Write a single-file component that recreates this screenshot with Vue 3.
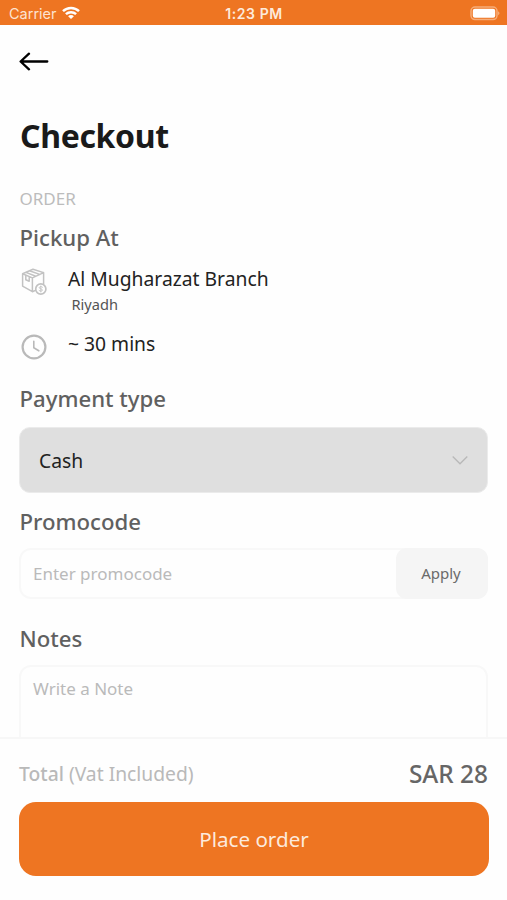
<script setup>
import { ref } from 'vue'

const promo = ref('')
const note = ref('')
</script>

<template>
  <div class="screen">
    <header class="status">
      <div class="carrier">
        <span>Carrier</span>
        <svg width="18" height="14" viewBox="0 0 18 14" fill="none" stroke="#fff" stroke-width="2.5">
          <path d="M1 5.2C5.5.9 12.5.9 17 5.2" />
          <path d="M3.9 8.2c2.9-2.7 7.3-2.7 10.2 0" />
          <path d="M6.1 10.2c1.6-1.5 4.2-1.5 5.8 0L9 13.1z" fill="#fff" stroke="none" />
        </svg>
      </div>
      <span class="time">1:23 PM</span>
      <svg class="battery" width="31" height="15" viewBox="0 0 31 15">
        <rect x="1" y="1" width="26" height="12.6" rx="4" fill="none" stroke="#f6ad79" stroke-width="1.5" />
        <rect x="2.8" y="2.8" width="22.4" height="9" rx="2" fill="#fff" />
        <path d="M28.3 5.3q2.2 2 0 4z" fill="#f9c39b" />
      </svg>
    </header>

    <main class="content">
      <svg class="back" width="30" height="20" viewBox="0 0 30 20" fill="none" stroke="#000" stroke-width="2.3" stroke-linecap="round" stroke-linejoin="round">
        <path d="M28.3 10.5H1.8M10 2.7L1.6 10.5l8.4 7.8" />
      </svg>
      <h1>Checkout</h1>
      <p class="eyebrow">ORDER</p>
      <h2 class="t-pickup">Pickup At</h2>

      <div class="info branch">
        <svg width="28" height="28" viewBox="0 0 28 28" fill="none" stroke="#c2c2c2" stroke-width="1.5" stroke-linejoin="round" stroke-linecap="round">
          <path d="M2.6 5.8L13 1.2l10.6 3.4v11.2M2.6 5.8l9.8 4.1 11.2-5.3M2.6 5.8v12.3l9.8 5.6 3.6-1.6M12.4 9.9v13.8M5.9 4.4l9.9 3.9M9.5 2.8l10.2 3.6M5.8 7.4v4.3l3.4 1.5V8.8" />
          <circle cx="20.8" cy="21" r="5.1" fill="#fff" stroke-width="1.7" />
          <path d="M22.5 19.2c-1-1-3.3-.7-3.3.5 0 1.5 3.3.8 3.3 2.4 0 1.2-2.4 1.4-3.4.4M20.8 18v6" stroke-width=".9" />
        </svg>
        <div class="place">
          <span class="line">Al Mugharazat Branch</span>
          <span class="city">Riyadh</span>
        </div>
      </div>
      <div class="info eta">
        <svg width="28" height="28" viewBox="0 0 28 28" fill="none" stroke="#b9b9b9" stroke-linecap="round" stroke-linejoin="round">
          <circle cx="14" cy="14" r="11.4" stroke-width="2.2" />
          <path d="M13.8 8.2v6.6l5 3" stroke-width="1.6" />
        </svg>
        <span class="line">~ 30 mins</span>
      </div>

      <h2 class="t-payment">Payment type</h2>
      <div class="select">
        <span>Cash</span>
        <svg width="18" height="12" viewBox="0 0 18 12" fill="none" stroke="#b8b8b8" stroke-width="1.3">
          <path d="M1.7 2.5L9 9.8 16.3 2.5" />
        </svg>
      </div>

      <h2 class="t-promo">Promocode</h2>
      <div class="promo">
        <input v-model="promo" placeholder="Enter promocode" />
        <button class="apply">Apply</button>
      </div>

      <h2 class="t-notes">Notes</h2>
      <textarea v-model="note" placeholder="Write a Note"></textarea>
    </main>

    <footer class="summary">
      <div class="total">
        <span class="label"><b>Total</b> (Vat Included)</span>
        <span class="amount">SAR 28</span>
      </div>
      <button class="order">Place order</button>
    </footer>
  </div>
</template>

<style>
body {
  margin: 0;
  background: #fff;
}
</style>

<style scoped>
.screen {
  display: flex;
  flex-direction: column;
  width: 507px;
  height: 900px;
  overflow: hidden;
  background: #fefefe;
  font-family: "Noto Sans", "Open Sans", sans-serif;
  color: #222;
}
.screen * {
  box-sizing: border-box;
}
svg {
  display: block;
  flex: none;
}
.status {
  display: grid;
  grid-template-columns: 1fr auto 1fr;
  align-items: center;
  flex: none;
  height: 25px;
  padding: 2px 6px 0 9px;
  background: #ee7522;
  color: #fff;
  font: 14.5px/20px Inter, sans-serif;
}
.carrier {
  display: flex;
  align-items: center;
  gap: 5px;
  color: #fde3d0;
}
.carrier svg {
  margin-top: -1px;
}
.time {
  margin-right: 2px;
  font-size: 14px;
  font-weight: 600;
  letter-spacing: 0.6px;
  color: #fdeadc;
}
.battery {
  justify-self: end;
}
.content {
  display: flex;
  flex-direction: column;
  flex: 1;
  min-height: 0;
  overflow: hidden;
  padding: 26px 19px 0 20px;
}
.back {
  margin: 0 0 45px -1px;
}
h1, h2, p {
  margin: 0;
  flex: none;
}
h1 {
  font-size: 32px;
  line-height: 40px;
  font-weight: 700;
  letter-spacing: -0.35px;
  color: #1a1a1a;
}
.eyebrow {
  margin: 33px 0 0 -0.5px;
  font-size: 17px;
  line-height: 20px;
  color: #bcbcbc;
}
h2 {
  margin-left: -0.5px;
  padding-top: 2px;
  font-size: 22.2px;
  line-height: 28px;
  font-weight: 500;
  color: #606060;
}
.t-pickup {
  margin-top: 13px;
}
.info {
  display: flex;
  align-items: flex-start;
  flex: none;
  gap: 20px;
}
.line {
  font-size: 19.3px;
  line-height: 26px;
}
.branch {
  margin-top: 14px;
}
.branch svg {
  margin-top: 2px;
}
.place {
  display: flex;
  flex-direction: column;
}
.city {
  margin-left: 3.5px;
  font-size: 14.6px;
  line-height: 24px;
  color: #555;
}
.eta {
  margin-top: 15px;
}
.eta svg {
  margin-top: 2px;
}
.t-payment {
  margin-top: 22px;
}
.select {
  display: flex;
  align-items: center;
  justify-content: space-between;
  flex: none;
  height: 66px;
  margin: 14px 0 0 -1px;
  padding: 0 18px 0 19px;
  border: 1px solid #ebebeb;
  border-radius: 11px;
  background: #dfdfdf;
  font-size: 19.3px;
}
.t-promo {
  margin-top: 13px;
}
.promo {
  display: flex;
  flex: none;
  height: 51px;
  margin: 12px 0 0 -1px;
  border: 2px solid #f8f8f8;
  border-radius: 12px;
}
input, textarea, button {
  margin: 0;
  border: 0;
  outline: 0;
  background: none;
  font-family: inherit;
}
input {
  flex: 1;
  min-width: 0;
  padding: 0 12px;
  font-size: 17px;
}
::placeholder {
  color: #bababa;
  opacity: 1;
}
.apply {
  width: 92px;
  margin: -2px -2px -2px 0;
  padding: 0 5px 2px 3px;
  border-radius: 11px;
  background: #f5f5f5;
  font-size: 15px;
  color: #6a6a6a;
}
.t-notes {
  margin-top: 24px;
}
textarea {
  flex: none;
  height: 110px;
  margin: 12px 0 0 -1px;
  padding: 10px 12px;
  border: 2px solid #f8f8f8;
  border-radius: 12px;
  font-size: 17px;
  line-height: 24px;
  resize: none;
}
.summary {
  flex: none;
  height: 163px;
  padding: 19px 18px 0 19px;
  border-top: 2px solid #f7f7f7;
}
.total {
  display: flex;
  justify-content: space-between;
  align-items: center;
  height: 32px;
}
.label {
  font-size: 19.3px;
  line-height: 30px;
  color: #b9b9b9;
}
.label b {
  font-weight: 500;
}
.amount {
  margin-right: 1px;
  font-size: 24.4px;
  line-height: 30px;
  font-weight: 500;
  color: #666;
}
.order {
  display: block;
  width: 100%;
  height: 74px;
  margin-top: 12px;
  border-radius: 17px;
  background: #ee7522;
  font-size: 20.6px;
  color: #fdeadc;
}
</style>
